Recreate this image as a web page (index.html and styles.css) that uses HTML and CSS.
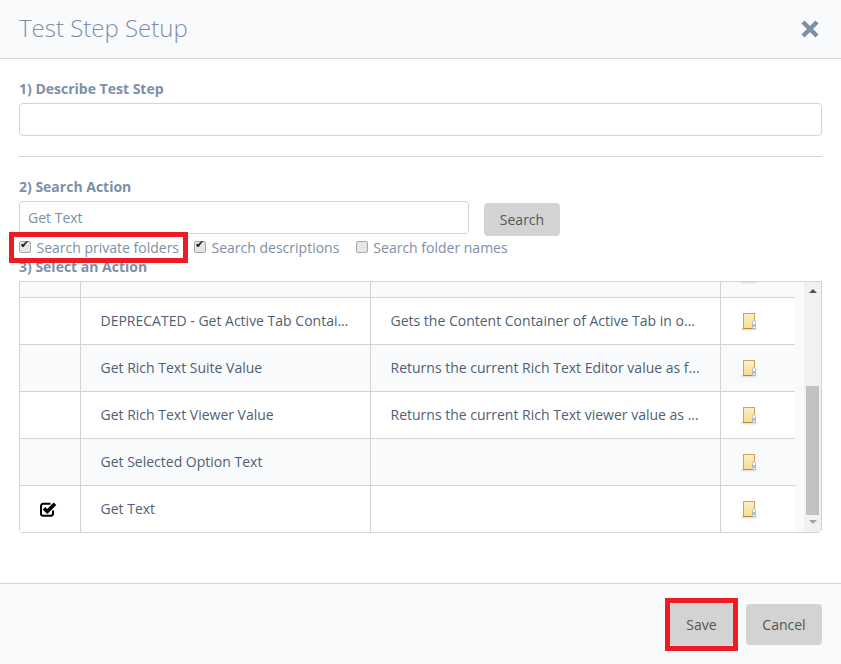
FILE: index.html
```html
<!DOCTYPE html>
<html>

<head>
    <meta charset="UTF-8">
    <title>Test Step Setup</title>
    <link rel="stylesheet" href="styles.css">
</head>

<body>
    <svg class="defs" width="0" height="0">
        <defs>
            <linearGradient id="noteFill" x1="0" y1="0" x2="0" y2="1">
                <stop offset="0" stop-color="#fdf0c4"/>
                <stop offset="1" stop-color="#f8dc8e"/>
            </linearGradient>
        </defs>
        <symbol id="note" viewBox="0 0 16 18">
            <rect x="0" y="14.5" width="16" height="3" rx="1.5" fill="#e6e4de"/>
            <rect x="2.5" y="0.5" width="11" height="15" fill="url(#noteFill)" stroke="#c8a45c"/>
            <path d="M2 15.5H14" stroke="#b08a3e"/>
            <path d="M11.5 15.5V9.5q0-2 1.5-2t1.5 2v6z" fill="#fff" stroke="#b8b4a8" stroke-width="0.9"/>
            <rect x="12.4" y="11" width="1.2" height="3" fill="#3fb0ee"/>
        </symbol>
    </svg>
    <div class="modal">
        <div class="modal-head">
            <h2 class="modal-title">Test Step Setup</h2>
            <svg class="close" width="20" height="20" viewBox="0 0 20 20">
                <path d="M3 3L17 17M17 3L3 17" stroke="#7d8fa6" stroke-width="4.4" fill="none"/>
            </svg>
        </div>
        <div class="modal-body">
            <label class="field-label">1) Describe Test Step</label>
            <input class="text-input" type="text">
            <hr class="divider">
            <label class="field-label">2) Search Action</label>
            <div class="search-row">
                <input class="text-input search-input" type="text" value="Get Text">
                <button class="btn search-btn">Search</button>
            </div>
            <div class="check-row">
                <label class="check marked"><input type="checkbox" checked>Search private folders</label>
                <label class="check"><input type="checkbox" checked>Search descriptions</label>
                <label class="check"><input type="checkbox">Search folder names</label>
            </div>
            <label class="field-label third">3) Select an Action</label>
            <div class="grid-box">
                <div class="grid-pane">
                    <table class="grid">
                        <tr>
                            <td class="c-check"></td>
                            <td class="c-name"></td>
                            <td class="c-desc"></td>
                            <td class="c-icon"><svg class="note"><use href="#note"/></svg></td>
                        </tr>
                        <tr>
                            <td></td>
                            <td>DEPRECATED - Get Active Tab Contai...</td>
                            <td>Gets the Content Container of Active Tab in o...</td>
                            <td class="c-icon"><svg class="note"><use href="#note"/></svg></td>
                        </tr>
                        <tr>
                            <td></td>
                            <td>Get Rich Text Suite Value</td>
                            <td>Returns the current Rich Text Editor value as f...</td>
                            <td class="c-icon"><svg class="note"><use href="#note"/></svg></td>
                        </tr>
                        <tr>
                            <td></td>
                            <td>Get Rich Text Viewer Value</td>
                            <td>Returns the current Rich Text viewer value as ...</td>
                            <td class="c-icon"><svg class="note"><use href="#note"/></svg></td>
                        </tr>
                        <tr>
                            <td></td>
                            <td>Get Selected Option Text</td>
                            <td></td>
                            <td class="c-icon"><svg class="note"><use href="#note"/></svg></td>
                        </tr>
                        <tr>
                            <td class="c-check">
                                <svg class="tick" width="17" height="15" viewBox="0 0 17 15">
                                    <path d="M13 8.5v3a2.2 2.2 0 0 1-2.2 2.2H3.200A2.200 2.200 0 0 1 1 11.500V4a2.200 2.200 0 0 1 2.200-2.200H10.500" fill="none" stroke="#000" stroke-width="2"/>
                                    <path d="M4 6.200l3.300 3.300L15 1.800" fill="none" stroke="#000" stroke-width="3.600"/>
                                </svg>
                            </td>
                            <td>Get Text</td>
                            <td></td>
                            <td class="c-icon"><svg class="note"><use href="#note"/></svg></td>
                        </tr>
                    </table>
                </div>
                <div class="scrollbar">
                    <div class="arrow-up"></div>
                    <div class="thumb"></div>
                    <div class="arrow-down"></div>
                </div>
            </div>
        </div>
        <div class="modal-foot">
            <div class="mark-box"><button class="btn save-btn">Save</button></div>
            <button class="btn cancel-btn">Cancel</button>
        </div>
    </div>
</body>

</html>
```

FILE: styles.css
```css
* {
    box-sizing: border-box;
}

body {
    margin: 0;
    background-color: #fff;
    font-family: "Open Sans", "Liberation Sans", sans-serif;
    font-size: 14px;
    color: #7e8fa5;
}

.defs {
    display: block;
    height: 0;
}

.modal {
    display: flex;
    flex-direction: column;
    height: 664px;
}

.modal-head {
    display: flex;
    align-items: center;
    justify-content: space-between;
    height: 59px;
    padding: 0 21px 1px 19px;
    background-color: #f9fafc;
    border-bottom: 1px solid #d3d3d3;
}

.modal-title {
    margin: 0 0 3px;
    font-size: 24px;
    font-weight: 300;
    color: #7e8fa5;
}

.modal-body {
    flex: 1;
    padding: 20px 19px 0;
}

.field-label {
    display: block;
    height: 24px;
    line-height: 19px;
    font-weight: 700;
    color: #7e8fa5;
}

.text-input {
    display: block;
    width: 100%;
    height: 33px;
    padding: 0 8px;
    border: 1px solid #d3d3d3;
    border-radius: 4px;
    background-color: #fff;
    font-family: inherit;
    font-size: 14px;
    color: #7e8fa5;
}

.divider {
    height: 1px;
    margin: 20px 0 20px;
    border: 0;
    background-color: #d3d3d3;
}

.search-row {
    display: flex;
    gap: 15px;
}

.search-input {
    width: 450px;
}

.btn {
    border: 0;
    border-radius: 4px;
    background-color: #d3d3d3;
    font-family: inherit;
    font-size: 14px;
    color: #555;
}

.search-btn {
    width: 76px;
    height: 33px;
    margin-top: 2px;
}

.check-row {
    display: flex;
    gap: 15px;
    height: 21px;
    padding-top: 1px;
}

.check {
    display: flex;
    align-items: center;
    height: 21px;
    gap: 5.5px;
    white-space: nowrap;
}

.check:last-child {
    margin-left: 1.5px;
}

.check input {
    appearance: none;
    position: relative;
    width: 12px;
    height: 12px;
    margin: 0 0 2px;
    border: 1px solid #a9a9a9;
    border-radius: 2px;
    background-color: #e6e6e6;
}

.check input:checked::after {
    content: "\2714";
    position: absolute;
    top: -4px;
    left: 0;
    font-family: "DejaVu Sans", sans-serif;
    font-size: 11px;
    color: #222;
}

.marked {
    position: relative;
    z-index: 1;
    margin: 0 -4px 0 -5px;
    padding: 0 4px 0 5px;
    outline: 5px solid #ed1c24;
    background-color: #fff;
}

.third {
    height: 24px;
}

.grid-box {
    display: flex;
    height: 252px;
    border: 1px solid #d3d3d3;
    border-radius: 0 0 4px 4px;
}

.grid-pane {
    flex: 1;
    overflow: hidden;
    background-color: #f9fafc;
}

.grid {
    width: 775px;
    margin-top: -32px;
    border-collapse: collapse;
    table-layout: fixed;
    color: #4f5f75;
}

.grid tr {
    height: 47px;
}

.grid tr:nth-child(even) {
    background-color: #fff;
}

.grid td {
    padding: 0 20px 2px;
    border: 1px solid #d3d3d3;
    white-space: nowrap;
}

.grid td:first-child {
    border-left: 0;
}

.grid td:last-child {
    border-right: 0;
}

.grid tr:last-child td {
    border-bottom: 0;
}

.c-check {
    width: 60px;
}

.c-name {
    width: 290px;
}

.c-desc {
    width: 350px;
}

.grid td.c-icon {
    padding: 0 0 0 20px;
}

.grid tr:first-child .note {
    margin-top: 1px;
}

.note {
    display: block;
    width: 16px;
    height: 18px;
    margin-top: 2px;
}

.tick {
    display: block;
    margin: 2px 0 0 -0.5px;
}

.scrollbar {
    display: flex;
    flex-direction: column;
    align-items: center;
    width: 17px;
    background-color: #f1f1f1;
}

.arrow-up {
    width: 0;
    height: 0;
    margin: 7px 0 0;
    border: 4px solid transparent;
    border-top: 0;
    border-bottom: 4px solid #505050;
}

.thumb {
    width: 13px;
    height: 129px;
    margin-top: 93px;
    background-color: #c1c1c1;
}

.arrow-down {
    width: 0;
    height: 0;
    margin-top: 5px;
    border: 4px solid transparent;
    border-bottom: 0;
    border-top: 4px solid #a3a3a3;
}

.modal-foot {
    display: flex;
    justify-content: flex-end;
    align-items: center;
    gap: 8px;
    height: 81px;
    padding: 1px 19px 0;
    background-color: #f9fafc;
    border-top: 1px solid #d3d3d3;
}

.mark-box {
    border: 5px solid #ed1c24;
}

.save-btn {
    display: block;
    width: 63px;
    height: 43px;
}

.cancel-btn {
    width: 76px;
    height: 41px;
}
```
